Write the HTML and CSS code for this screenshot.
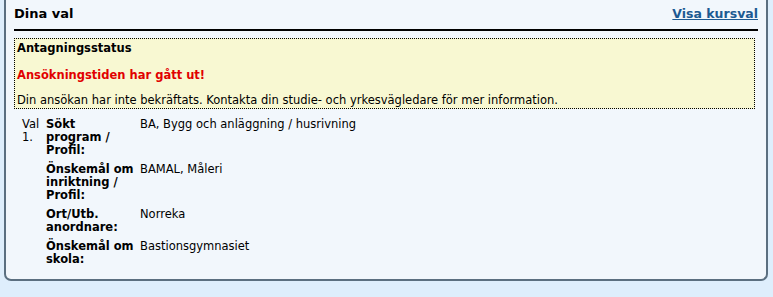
FILE: index.html
```html
<!DOCTYPE html>
<html>
<head>
    <title>Dina val</title>
    <link rel="stylesheet" href="styles.css">
</head>
<body>
    <div id="panel">
        <div class="head">
            <h2>Dina val</h2>
            <a href="#">Visa kursval</a>
        </div>
        <div class="status">
            <div class="status-title">Antagningsstatus</div>
            <div class="status-alert">Ansökningstiden har gått ut!</div>
            <div>Din ansökan har inte bekräftats. Kontakta din studie- och yrkesvägledare för mer information.</div>
        </div>
        <table class="choices">
            <tr>
                <td class="num" rowspan="4">Val 1.</td>
                <th>Sökt program / Profil:</th>
                <td>BA, Bygg och anläggning / husrivning</td>
            </tr>
            <tr>
                <th>Önskemål om inriktning / Profil:</th>
                <td>BAMAL, Måleri</td>
            </tr>
            <tr>
                <th>Ort/Utb. anordnare:</th>
                <td>Norreka</td>
            </tr>
            <tr>
                <th>Önskemål om skola:</th>
                <td>Bastionsgymnasiet</td>
            </tr>
        </table>
    </div>
</body>
</html>
```

FILE: styles.css
```css
body {
    margin: 0;
    padding: 0 5px 0 4px;
    background-color: #deeefc;
    font-family: "DejaVu Sans", Verdana, sans-serif;
    font-size: 11.5px;
    color: #000;
}

#panel {
    height: 281px;
    box-sizing: border-box;
    background-color: #f2f7fc;
    border: 2px solid #5b6f80;
    border-top: none;
    border-radius: 0 0 7px 7px;
    padding: 0 8px;
}

.head {
    display: flex;
    justify-content: space-between;
    align-items: flex-end;
    height: 29px;
    border-bottom: 2px solid #000;
    margin-bottom: 7px;
}

.head h2 {
    margin: 0 0 7px 0;
    font-size: 13px;
    line-height: 16px;
    font-weight: bold;
}

.head a {
    margin-bottom: 7px;
    font-size: 12.5px;
    line-height: 16px;
    font-weight: bold;
    color: #1d5a92;
}

.status {
    margin-right: 3px;
    padding: 3px 3px 1px 2px;
    background-color: #f8f8d2;
    border: 1px dotted #000;
    line-height: 13px;
}

.status-title {
    font-weight: bold;
    margin-bottom: 14px;
}

.status-alert {
    font-weight: bold;
    color: #e10000;
    margin-bottom: 12px;
}

.choices {
    margin-top: 9px;
    border-collapse: collapse;
    line-height: 13px;
}

.choices td,
.choices th {
    vertical-align: top;
    text-align: left;
    padding: 0 0 6px 0;
}

.choices .num {
    width: 32px;
    padding-left: 8px;
    box-sizing: border-box;
}

.choices th {
    width: 88px;
    padding-right: 6px;
    font-weight: bold;
}
```
